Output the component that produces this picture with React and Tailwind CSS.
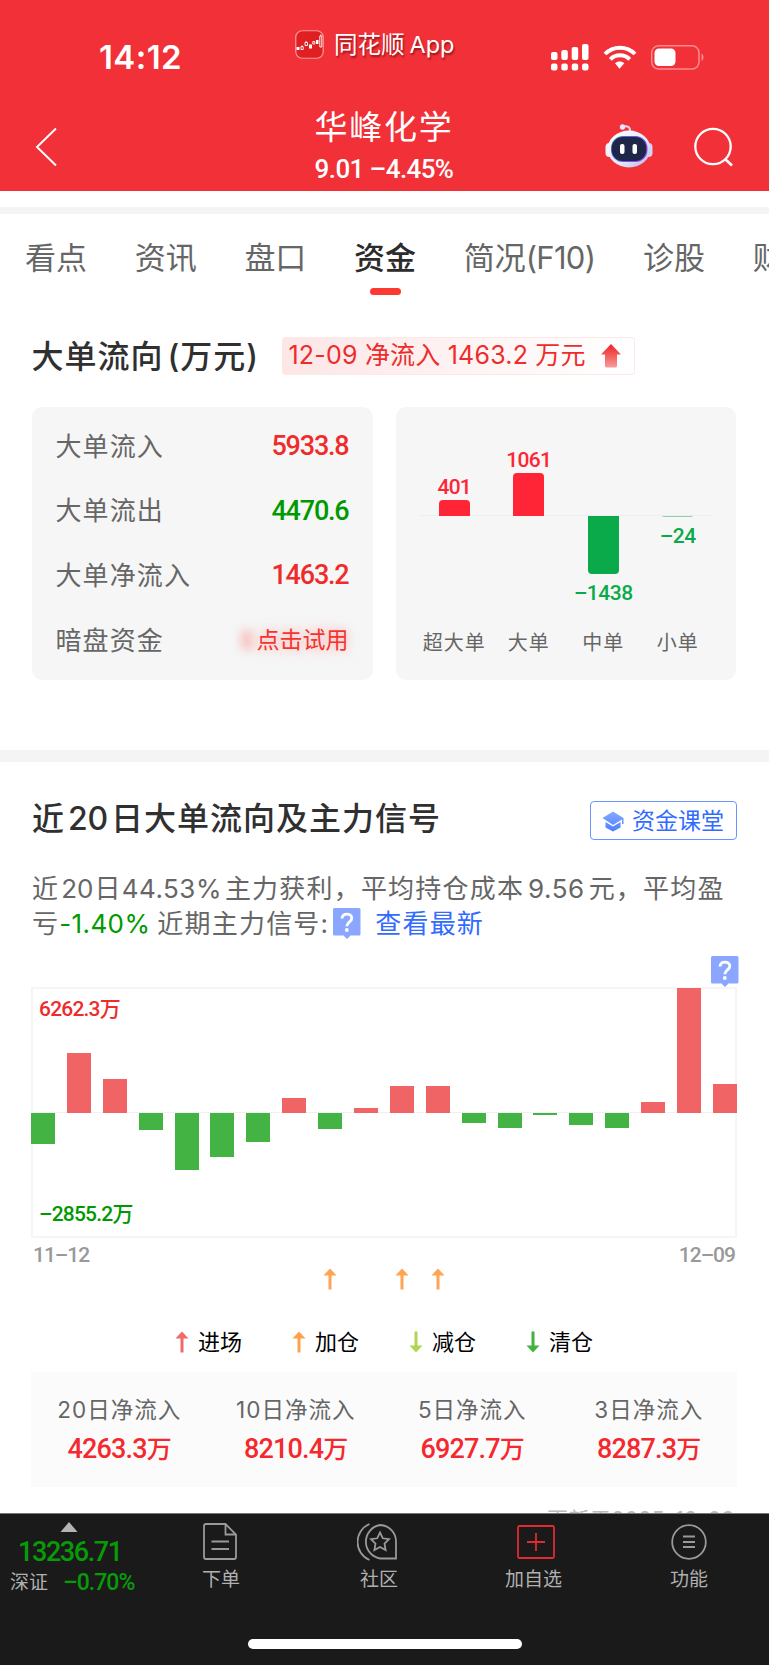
const tabs = [
  { label: '看点' },
  { label: '资讯' },
  { label: '盘口' },
  { label: '资金', active: true },
  { label: '简况', suffix: '(F10)' },
  { label: '诊股' },
  { label: '财务' },
];

const flows = [
  { label: '大单流入', value: '5933.8', color: 'text-[#ee2c2c]' },
  { label: '大单流出', value: '4470.6', color: 'text-[#009900]' },
  { label: '大单净流入', value: '1463.2', color: 'text-[#ee2c2c]' },
];

const orders = [
  { label: '超大单', value: 401, height: 16.5 },
  { label: '大单', value: 1061, height: 43.5 },
  { label: '中单', value: -1438, height: 58 },
  { label: '小单', value: -24, height: 2 },
];

// signed bar heights in px, one per trading day
const days = [-31, 60, 34, -17, -57, -44, -29, 15, -16, 5, 27, 27, -10, -15, -2, -12, -15, 11, 125, 29];
const addSignals = [8, 10, 11];

const legend = [
  { label: '进场', color: '#f06a6c', up: true },
  { label: '加仓', color: '#ffa04d', up: true },
  { label: '减仓', color: '#b2d555', up: false },
  { label: '清仓', color: '#45b240', up: false },
];

const netInflows = [
  { label: '20日净流入', value: '4263.3' },
  { label: '10日净流入', value: '8210.4' },
  { label: '5日净流入', value: '6927.7' },
  { label: '3日净流入', value: '8287.3' },
];

const formatValue = (n) => String(n).replace('-', '–');

function Num({ className = '', children }) {
  return <span className={`font-['Roboto','Noto_Sans_CJK_SC',sans-serif] font-medium whitespace-nowrap ${className}`}>{children}</span>;
}

function SignalArrow({ color, up = true }) {
  return (
    <svg width="14" height="22" viewBox="0 0 14 22" className={up ? 'shrink-0' : 'shrink-0 rotate-180'}>
      <path d="M7 0.5 L13.5 7.5 H8.5 V21.5 H5.5 V7.5 H0.5 Z" fill={color} />
    </svg>
  );
}

function HelpBubble() {
  return (
    <svg width="28" height="31" viewBox="0 0 28 31" className="block">
      <path d="M1.5 0 H26 A1.5 1.5 0 0 1 27.5 1.5 V26 A1.5 1.5 0 0 1 26 27.5 H17.5 L14 31 L10.5 27.5 H1.5 A1.5 1.5 0 0 1 0 26 V1.5 A1.5 1.5 0 0 1 1.5 0 Z" fill="#8ba6ff" />
      <path d="M9 10.5 C9 4.5 18.8 4.8 18.8 10.3 C18.8 13.8 13.8 14 13.8 18.3" fill="none" stroke="#fff" strokeWidth="2.8" />
      <circle cx="13.8" cy="22" r="1.9" fill="#fff" />
    </svg>
  );
}

function StatusBar() {
  return (
    <div className="flex h-[96px] text-white">
      <div className="w-[295px] pl-[99px] pt-[37px] text-[33px] leading-[40px] font-semibold tracking-[0.4px]">14:12</div>
      <svg width="29" height="29" viewBox="0 0 29 29" className="mt-[30px]">
        <rect x="0.75" y="0.75" width="27.5" height="27.5" rx="6.5" fill="#e01f22" stroke="#f89a9a" strokeWidth="1.2" />
        <g fill="#fff">
          <rect x="1.5" y="17" width="3" height="3" />
          <rect x="14" y="14.5" width="3" height="4" />
          <rect x="21" y="10" width="2.5" height="4" />
        </g>
        <g fill="none" stroke="#fff" strokeWidth="0.9">
          <path d="M6 16.5h2.2v3H6zM10 12.5h2.5v3H10zM17.8 11.5h2v2.5h-2zM24.8 6h2v11h-2zM11 11v1.5M25.8 4.5V6M7 15.5v1" />
        </g>
      </svg>
      <div className="w-[216px] pl-[10px] pt-[29px] text-[23.5px] leading-[32px] [text-shadow:1px_2px_2px_rgba(90,0,0,0.6)]">
        同花顺<span className="ml-[5px]">App</span>
      </div>
      <svg width="170" height="28" viewBox="0 0 170 28" className="-ml-1 mt-[43px]">
        <g fill="#fff">
          <rect x="15" y="9" width="6.5" height="8" rx="2" />
          <rect x="25.3" y="7" width="6.5" height="10" rx="2" />
          <rect x="35.7" y="4" width="6.5" height="13" rx="2" />
          <rect x="46" y="1" width="6.5" height="16" rx="2" />
          <rect x="15" y="20.5" width="6.5" height="7" rx="2.2" />
          <rect x="25.3" y="20.5" width="6.5" height="7" rx="2.2" />
          <rect x="35.7" y="20.5" width="6.5" height="7" rx="2.2" />
          <rect x="46" y="20.5" width="6.5" height="7" rx="2.2" />
          <path d="M79 20.3 L83.5 25.8 L88.3 20.3 C85.8 17.8 81.5 17.8 79 20.3 Z" />
        </g>
        <g fill="none" stroke="#fff" strokeWidth="4">
          <path d="M69 11 C77 2.5 91 2.5 99 11" />
          <path d="M74.3 16.4 C79.5 11 88.5 11 93.7 16.4" />
        </g>
        <rect x="115.7" y="2.7" width="47.3" height="23.3" rx="7" fill="none" stroke="#f98a8e" strokeWidth="1.5" />
        <rect x="118.5" y="5.5" width="21" height="17.5" rx="4.5" fill="#fff" />
        <path d="M165.5 10.5 C168.2 12 168.2 16.5 165.5 18 Z" fill="#f98a8e" />
      </svg>
    </div>
  );
}

function TitleBar() {
  return (
    <div className="flex h-[95px] text-white">
      <svg width="24" height="42" viewBox="0 0 24 42" className="ml-[34px] mt-[30px]">
        <path d="M22 2.5 L3 21 L22 39.5" fill="none" stroke="#fff" strokeWidth="2" />
      </svg>
      <div className="ml-[180px] w-[292px] text-center">
        <div className="h-[50px] pt-[6px] text-[33px] leading-[50px] tracking-[1.7px]">华峰化学</div>
        <Num className="mt-[8px] block text-[26px] leading-[30px] tracking-[-0.6px]">9.01 –4.45%</Num>
      </div>
      <svg width="48" height="48" viewBox="0 0 48 48" className="ml-[75px] mt-[26px]">
        <defs>
          <linearGradient id="shell" x1="0" y1="0" x2="1" y2="1">
            <stop offset="0" stopColor="#ffffff" />
            <stop offset="0.6" stopColor="#e6e6fa" />
            <stop offset="1" stopColor="#b3b4e6" />
          </linearGradient>
          <linearGradient id="visor" x1="0" y1="0" x2="1" y2="0.6">
            <stop offset="0" stopColor="#3ab0c8" />
            <stop offset="0.3" stopColor="#5560d8" />
            <stop offset="1" stopColor="#8a4af0" />
          </linearGradient>
        </defs>
        <path d="M18 4.5 C23 3.5 25.5 5 25 10" fill="none" stroke="#e8d8f4" strokeWidth="2" />
        <circle cx="17.5" cy="5" r="2.7" fill="#e9e4fa" />
        <rect x="0.5" y="21" width="8" height="14" rx="4" fill="#f1f1fc" />
        <rect x="39.5" y="21" width="8" height="14" rx="4" fill="#d4d4f2" />
        <ellipse cx="24" cy="27" rx="21.5" ry="18.5" fill="url(#shell)" />
        <rect x="6" y="14" width="36.5" height="26" rx="12" fill="url(#visor)" />
        <rect x="6.8" y="15" width="34.5" height="24" rx="11" fill="#1e2748" />
        <rect x="15" y="22" width="4.5" height="10" rx="2" fill="#fff" />
        <rect x="27.5" y="22" width="4.5" height="10" rx="2" fill="#fff" />
      </svg>
      <svg width="42" height="42" viewBox="0 0 42 42" className="ml-[40px] mt-[30px]">
        <circle cx="20" cy="20.5" r="17.7" fill="none" stroke="#fff" strokeWidth="2.3" />
        <path d="M32 33 L39 39.5" stroke="#fff" strokeWidth="2.6" />
      </svg>
    </div>
  );
}

function FlowCard() {
  return (
    <div className="h-[273px] w-[341px] rounded-[10px] bg-[#f6f6f6] px-6 pt-[7px]">
      {flows.map((row) => (
        <div key={row.label} className="flex h-[64.6px] items-center justify-between">
          <span className="text-[26px] tracking-[1.1px] text-[#666]">{row.label}</span>
          <Num className={`text-[27px] tracking-[-1.2px] ${row.color}`}>{row.value}</Num>
        </div>
      ))}
      <div className="flex h-[64.6px] items-center justify-between">
        <span className="text-[26px] tracking-[1.1px] text-[#666]">暗盘资金</span>
        <span className="flex items-center">
          <span className="h-5 w-3 bg-[#f8c4c4] blur-[5px]" />
          <span className="ml-1 text-[23px] text-[#f5342e] [text-shadow:0_0_12px_rgba(255,80,80,0.5)]">点击试用</span>
        </span>
      </div>
    </div>
  );
}

function OrderCard() {
  return (
    <div className="h-[273px] w-[340px] rounded-[10px] bg-[#f6f6f6] px-[21px]">
      <div className="relative grid h-[212px] grid-cols-4">
        <div className="absolute top-[108px] left-[3px] h-px w-[293px] bg-[#eeeeee]" />
        {orders.map((o) =>
          o.value > 0 ? (
            <div key={o.label} className="relative flex h-[109px] flex-col items-center justify-end">
              <Num className="text-[21px] leading-[26px] tracking-[-0.7px] text-[#ff2436]">{o.value}</Num>
              <div className="w-[31px] rounded-t-[4px] bg-[#ff2436]" style={{ height: o.height }} />
            </div>
          ) : (
            <div key={o.label} className="relative flex flex-col items-center pt-[109px]">
              <div
                className={o.value < -100 ? 'w-[31px] rounded-b-[4px] bg-[#0aaa4a]' : '-mt-px w-[31px] rounded-b-[4px] border-b border-[#8ed4a9]'}
                style={{ height: o.height }}
              />
              <Num className="mt-[6px] text-[21px] leading-[26px] tracking-[-0.5px] text-[#0aaa4a]">{formatValue(o.value)}</Num>
            </div>
          )
        )}
      </div>
      <div className="grid grid-cols-4 text-center text-[20px] leading-[48px] tracking-[1px] whitespace-nowrap text-[#666]">
        {orders.map((o) => (
          <span key={o.label}>{o.label}</span>
        ))}
      </div>
    </div>
  );
}

function DailyChart() {
  return (
    <div className="relative mt-[46px] h-[251px] border-2 border-[#f5f5f5]">
      <div className="absolute -top-[33px] -right-[4px]">
        <HelpBubble />
      </div>
      <Num className="absolute top-[7px] left-[6px] text-[21px] leading-[26px] tracking-[-0.8px] text-[#ee2c2c]">6262.3万</Num>
      <Num className="absolute bottom-[9px] left-[6px] text-[21px] leading-[26px] tracking-[-0.8px] text-[#009900]">–2855.2万</Num>
      <div className="absolute top-[123px] left-0 h-px w-full bg-[#f0f0f0]" />
      <div className="relative -mx-[2px] -mt-px flex justify-between">
        {days.map((h, i) => (
          <div key={i} className="w-6">
            {h > 0 ? (
              <div className="flex h-[125px] items-end">
                <div className="w-full bg-[#f06466]" style={{ height: h }} />
              </div>
            ) : (
              <div className="pt-[125px]">
                <div className="w-full bg-[#43b343]" style={{ height: -h }} />
              </div>
            )}
          </div>
        ))}
      </div>
    </div>
  );
}

function BottomBar() {
  return (
    <div className="relative h-[152px] shrink-0 border-t border-[#777] bg-[#1a1a1a] text-[19px] text-[#b0b0b0]">
      <div className="flex h-[90px]">
        <div className="w-[138px] pt-[8px]">
          <svg width="18" height="10" viewBox="0 0 18 10" className="ml-[60px] block">
            <path d="M9 0 L17.5 10 H0.5 Z" fill="#b4b4b4" />
          </svg>
          <Num className="mt-[5px] block pl-[18px] text-[27px] leading-[30px] tracking-[-1.4px] text-[#089b08]">13236.71</Num>
          <div className="flex items-center leading-[32px]">
            <span className="w-[53px] pl-[10px]">深证</span>
            <Num className="pl-[10px] text-[23px] tracking-[-1px] text-[#089b08]">–0.70%</Num>
          </div>
        </div>
        <div className="flex w-[166px] flex-col items-center">
          <svg width="34" height="37" viewBox="0 0 34 37" className="mt-[9px] -ml-[3px]" fill="none" stroke="#999" strokeWidth="1.8">
            <path d="M3 1 H22.5 L33 11.5 V34 Q33 36 31 36 H3 Q1 36 1 34 V3 Q1 1 3 1 Z M22.5 1 V11.5 H33 M8.5 18.5 H26 M8.5 26 H26" />
          </svg>
          <span className="mt-[6px] leading-[28px]">下单</span>
        </div>
        <div className="flex w-[150px] flex-col items-center">
          <svg width="41" height="38" viewBox="0 0 41 38" className="mt-[9px] -ml-[3px]" fill="none" stroke="#999" strokeWidth="1.8">
            <path d="M23 2 A17 17 0 0 0 23 35.5 H39 V19 A16.5 16.5 0 0 0 23 2 Z" />
            <path d="M12.5 1 A19.5 19.5 0 0 0 12.5 37" />
            <path d="M23 9.5 L25.8 15.3 L32 16.2 L27.5 20.6 L28.6 27 L23 24 L17.4 27 L18.5 20.6 L14 16.2 L20.2 15.3 Z" />
          </svg>
          <span className="mt-[5px] leading-[28px]">社区</span>
        </div>
        <div className="flex w-[160px] flex-col items-center">
          <svg width="38" height="34" viewBox="0 0 38 34" className="mt-[11px] ml-[3px]" fill="none" stroke="#e02a2e" strokeWidth="1.8">
            <rect x="1" y="1" width="36" height="32" rx="1.5" />
            <path d="M19 8 V26 M10 17 H28" />
          </svg>
          <span className="mt-[7px] -ml-px leading-[28px]">加自选</span>
        </div>
        <div className="flex flex-1 flex-col items-center">
          <svg width="36" height="36" viewBox="0 0 36 36" className="mt-[10px] -ml-[5px]" fill="none" stroke="#999" strokeWidth="1.8">
            <circle cx="18" cy="18" r="16.8" />
            <path d="M12 12.5 H24 M12 18 H24 M12 23 H24" />
          </svg>
          <span className="mt-[6px] -ml-[5px] leading-[28px]">功能</span>
        </div>
      </div>
      <div className="mx-auto mt-[35px] h-[10px] w-[274px] rounded-full bg-white" />
    </div>
  );
}

export default function App() {
  return (
    <div className="flex h-[1665px] w-[769px] flex-col overflow-hidden bg-white font-['Inter','Noto_Sans_CJK_SC',sans-serif]">
      <header className="h-[191px] shrink-0 bg-[#f23038]">
        <StatusBar />
        <TitleBar />
      </header>

      <main className="min-h-0 flex-1 overflow-hidden">
        <div className="mt-4 h-[7px] bg-[#f4f4f4]" />

        <nav className="flex h-[88px] gap-[47.7px] overflow-hidden pl-[25px] text-[31px] whitespace-nowrap text-[#666]">
          {tabs.map((tab) => (
            <div key={tab.label} className="flex shrink-0 flex-col items-center">
              <span className={`h-[74px] pt-[21px] leading-[46px] ${tab.active ? 'font-medium text-[#2c2c2c]' : ''}`}>
                {tab.label}
                {tab.suffix && <span className="tracking-[-0.7px]">{tab.suffix}</span>}
              </span>
              {tab.active && <span className="h-[7px] w-[31px] rounded-full bg-[#fd3a31]" />}
            </div>
          ))}
        </nav>

        <section className="pr-[33px] pl-[31.5px]">
          <div className="flex items-start pt-[31px]">
            <h2 className="w-[250px] pt-px text-[32px] leading-[46px] font-medium tracking-[1px] whitespace-nowrap text-[#303030]">
              大单流向<span className="ml-[4px]">(万元)</span>
            </h2>
            <div className="mt-[4px] flex h-[38px] w-[353px] items-center rounded-[3px] border border-[#fde8e8] bg-linear-to-r from-[#fde6e6] to-white pl-[6px] text-[25px] tracking-[0.2px] whitespace-nowrap text-[#ee2c2c]">
              12-09 净流入 1463.2 万元
              <svg width="20" height="24" viewBox="0 0 20 24" className="ml-[15px] shrink-0">
                <defs>
                  <linearGradient id="upFade" x1="0" y1="0" x2="0" y2="1">
                    <stop offset="0" stopColor="#ee2222" />
                    <stop offset="1" stopColor="#f79b9b" />
                  </linearGradient>
                </defs>
                <path d="M10 0 L20 10.5 H16 V22 Q16 23.5 14.5 23.5 H5.5 Q4 23.5 4 22 V10.5 H0 Z" fill="url(#upFade)" />
              </svg>
            </div>
          </div>
          <div className="mt-[27px] flex justify-between">
            <FlowCard />
            <OrderCard />
          </div>
        </section>

        <div className="mt-[70px] h-[12px] bg-[#f4f4f4]" />

        <section className="pr-8 pl-[31px]">
          <div className="flex items-start justify-between pt-[34px]">
            <h2 className="pl-px text-[32px] leading-[46px] font-medium tracking-[1px] whitespace-nowrap text-[#303030]">
              近<span className="mx-[3px] tracking-[-0.2px]">20</span>日大单流向及主力信号
            </h2>
            <button className="mt-[5px] flex h-[39px] w-[147px] items-center rounded-[4px] border-[1.5px] border-[#6c93ff] pt-px pl-[11px] text-[23px] text-[#316bff]">
              <svg width="22" height="21" viewBox="0 0 22 21" className="mr-[8px]">
                <defs>
                  <linearGradient id="cap" x1="0" y1="0" x2="0" y2="1">
                    <stop offset="0" stopColor="#8aaaff" />
                    <stop offset="1" stopColor="#4a7dff" />
                  </linearGradient>
                </defs>
                <path d="M11 0.5 L21.5 7 V13 H20 V8.5 L11 14 L0.5 7 Z M3.5 11 L11 15.5 L18.5 11 V16.5 L11 20.5 L3.5 16.5 Z" fill="url(#cap)" />
              </svg>
              资金课堂
            </button>
          </div>

          <div className="mt-[29px] pl-px text-[26px] leading-[35px] tracking-[1.2px] whitespace-nowrap text-[#666]">
            <p>
              近<span className="mr-px ml-[2px] tracking-normal">20</span>日
              <span className="mr-[3px] tracking-[0.5px]">44.53%</span>主力获利，平均持仓成本
              <span className="mr-[4px] ml-[4px] tracking-[0.5px]">9.56</span>元，平均盈
            </p>
            <div className="flex">
              亏<span className="tracking-[0.4px] text-[#009900]">-1.40%</span>
              <span className="mr-[4px] ml-[7px]">近期主力信号:</span>
              <div className="mt-[2px] h-[33px]">
                <HelpBubble />
              </div>
              <span className="ml-[14px] text-[#316bff]">查看最新</span>
            </div>
          </div>

          <DailyChart />

          <div className="flex justify-between px-[2px] pt-[5px] leading-[24px] text-[#999]">
            <Num className="text-[21px] tracking-[-1px]">11–12</Num>
            <Num className="text-[21px] tracking-[-1px]">12–09</Num>
          </div>
          <div className="mt-px flex h-[22px] justify-between">
            {days.map((_, i) => (
              <div key={i} className="flex w-6 justify-center">
                {addSignals.includes(i) && <SignalArrow color="#ffa452" />}
              </div>
            ))}
          </div>

          <div className="mt-[36px] flex justify-center gap-[50px] text-[22px] leading-[32px] text-black">
            {legend.map((item) => (
              <div key={item.label} className="flex items-center gap-[9px]">
                <SignalArrow color={item.color} up={item.up} />
                {item.label}
              </div>
            ))}
          </div>

          <div className="mt-[14px] grid h-[115px] grid-cols-4 bg-[#fbfbfb] pt-[21px] text-center">
            {netInflows.map((item) => (
              <div key={item.label}>
                <div className="text-[22.5px] leading-[34px] tracking-[1px] text-[#666]">{item.label}</div>
                <Num className="block pt-[3px] text-[27px] leading-[38px] tracking-[-0.8px] text-[#f5282e]">
                  {item.value}<span className="text-[25px]">万</span>
                </Num>
              </div>
            ))}
          </div>

          <div className="pt-[17px] pr-[2px] text-right text-[21px] leading-[32px] tracking-[0.5px] text-[#bbb]">更新于2025-12-09</div>
        </section>
      </main>

      <BottomBar />
    </div>
  );
}
